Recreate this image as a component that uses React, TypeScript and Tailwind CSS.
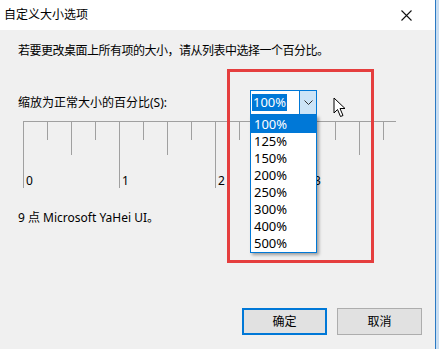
import React from "react";

const font = { fontFamily: '"Noto Sans", "Noto Sans CJK SC", sans-serif' };

const options = ["100%", "125%", "150%", "200%", "250%", "300%", "400%", "500%"];

function Ruler() {
  const ticks: { x: number; h: number }[] = [];
  for (let i = 0; i <= 15; i++) {
    const x = 0.5 + i * 24;
    const h = i % 4 === 0 ? 67 : i % 2 === 0 ? 34 : 19;
    ticks.push({ x, h });
  }
  return (
    <svg width="380" height="72" className="block" style={font}>
      <line x1="0" y1="0.5" x2="373" y2="0.5" stroke="#a0a0a0" />
      {ticks.map((t, i) => (
        <line key={i} x1={t.x} y1="0" x2={t.x} y2={t.h} stroke="#a0a0a0" />
      ))}
      {[0, 1, 2, 3].map((n) => (
        <text key={n} x={3 + n * 96} y="64" fontSize="12" fill="#000">
          {n}
        </text>
      ))}
    </svg>
  );
}

export default function App() {
  return (
    <div className="relative w-[439px] h-[349px] overflow-hidden bg-[#c9def2] flex text-[12px] text-black" style={font}>
      <div className="w-[436px] h-full flex flex-col bg-[#f0f0f0] border-r border-[#2b7ac4]">
        {/* title bar */}
        <div className="h-[30px] bg-white flex items-center justify-between pl-[4px] pr-[23px]">
          <span className="text-[12px]">自定义大小选项</span>
          <svg width="11" height="11" viewBox="0 0 11 11">
            <path d="M0.5 0.5L10.5 10.5M10.5 0.5L0.5 10.5" stroke="#111" strokeWidth="1.1" />
          </svg>
        </div>

        <div className="flex-1 flex flex-col px-[18px] pt-[12px] pb-[14px]">
          <p className="leading-[17px] tracking-[-0.5px]">若要更改桌面上所有项的大小，请从列表中选择一个百分比。</p>

          <div className="mt-[31px] flex items-center h-[25px]">
            <span className="w-[232px] leading-[17px]">缩放为正常大小的百分比(S):</span>
            <div className="relative w-[67px] h-[25px] border border-[#0078d7] bg-white flex">
              <div className="flex-1 flex items-center pl-[1px]">
                <span className="bg-[#0078d7] text-white px-[1px] leading-[17px] text-[13px]">100%</span>
              </div>
              <div className="w-[17px] bg-[#cce4f7] border-l border-[#0078d7] flex items-center justify-center">
                <svg width="9" height="5" viewBox="0 0 9 5">
                  <path d="M0.5 0.5L4.5 4.5L8.5 0.5" stroke="#333" fill="none" />
                </svg>
              </div>

              {/* open list */}
              <div className="absolute left-[-1px] top-[24px] w-[67px] bg-white border border-[#0078d7] shadow-[2px_2px_3px_rgba(0,0,0,0.35)] z-10">
                {options.map((o, i) => (
                  <div
                    key={o}
                    className={`h-[17px] leading-[17px] pl-[3px] text-[13px] ${i === 0 ? "bg-[#0078d7] text-white" : "text-black"}`}
                  >
                    {o}
                  </div>
                ))}
              </div>
            </div>

            {/* cursor */}
            <svg width="14" height="21" viewBox="0 0 14 21" className="ml-[16px] mt-[9px]">
              <path d="M1 1L1 16L4.5 12.5L7.5 19.5L10 18.5L7 11.5L12 11.5Z" fill="#fff" stroke="#000" strokeWidth="1" strokeLinejoin="round" />
            </svg>
          </div>

          <div className="mt-[6px] ml-[5px]">
            <Ruler />
          </div>

          <p className="mt-[16px] leading-[17px]">9 点 Microsoft YaHei UI。</p>

          <div className="mt-auto flex justify-end gap-[10px] -mr-[5px]">
            <button className="w-[85px] h-[27px] bg-[#e1e1e1] border-2 border-[#0078d7] text-[12px]">确定</button>
            <button className="w-[85px] h-[27px] bg-[#e1e1e1] border border-[#adadad] text-[12px]">取消</button>
          </div>
        </div>
      </div>

      {/* red annotation box */}
      <div className="absolute left-[227px] top-[69px] w-[147px] h-[194px] border-[3px] border-[#e53e3e] pointer-events-none" />
    </div>
  );
}
